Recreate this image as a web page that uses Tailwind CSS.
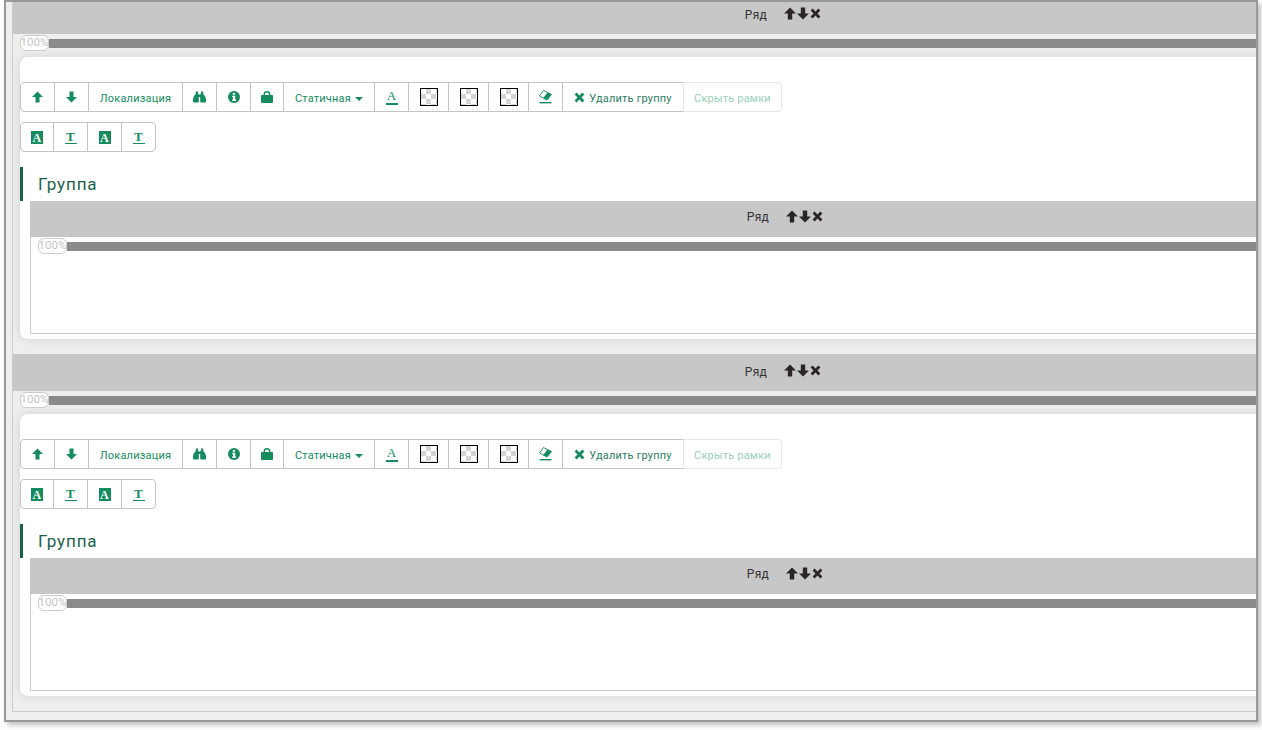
<!DOCTYPE html>
<html lang="ru">

<head>
    <meta charset="UTF-8">
    <meta name="viewport" content="width=device-width, initial-scale=1.0">
    <title>Группа</title>
    <script src="https://cdn.jsdelivr.net/npm/@tailwindcss/browser@4"></script>
</head>

<body class="bg-white h-screen overflow-hidden font-['Roboto',sans-serif]">
    <div class="ml-[4px] w-[1254px] h-[722px] border-2 border-[#999] bg-[#eee] pl-[6px] shadow-[3px_3px_5px_rgba(0,0,0,0.25)]">
        <div id="rows" class="h-[710px] border-l border-b border-[#ccc] overflow-hidden"></div>
    </div>

    <script>
        const rowsContainer = document.getElementById("rows");

        const arrowUp = `<svg class="w-[12px] h-[13px]" viewBox="0 0 12 13" fill="currentColor"><path d="M6 0.5 L12 6.5 L8.2 6.5 L8.2 12.5 L3.8 12.5 L3.8 6.5 L0 6.5 Z"/></svg>`;
        const arrowDown = `<svg class="w-[12px] h-[13px]" viewBox="0 0 12 13" fill="currentColor"><path d="M6 12.5 L12 6.5 L8.2 6.5 L8.2 0.5 L3.8 0.5 L3.8 6.5 L0 6.5 Z"/></svg>`;
        const cross = `<svg class="w-[11px] h-[11px]" viewBox="0 0 11 11" fill="currentColor"><path d="M2.6 0.6 L5.5 3.5 L8.4 0.6 L10.4 2.6 L7.5 5.5 L10.4 8.4 L8.4 10.4 L5.5 7.5 L2.6 10.4 L0.6 8.4 L3.5 5.5 L0.6 2.6 Z"/></svg>`;

        function rowHeader(size) {
            return `
                <div class="flex items-center justify-center bg-[#c7c7c7] text-[#333] ${size}">
                    <span class="text-[12px] tracking-[0.3px] mr-[17px]">Ряд</span>
                    <span class="flex items-center gap-[1px] text-[#2b2527] relative -top-[1px]">${arrowUp}${arrowDown}${cross}</span>
                </div>`;
        }

        function progress() {
            return `
                <div class="flex items-center h-[16px]">
                    <span class="flex items-center justify-center shrink-0 w-[29px] h-[16px] border border-[#ccc] rounded-[6px] bg-white text-[11.5px] text-[#c4c4c4] z-10">100%</span>
                    <div class="flex-1 h-[9px] bg-[#8a8a8a]"></div>
                </div>`;
        }

        const btn = "flex items-center justify-center h-[30px] border -ml-[1px] first:ml-0 bg-white text-[11px] tracking-[0.2px] first:rounded-l-[4px] last:rounded-r-[4px]";
        const normal = "border-[#c4c4c4] text-[#148c5e]";
        const checker = `<span class="block w-[18px] h-[18px] border border-black bg-[repeating-conic-gradient(#d4d4d4_0_25%,#fff_0_50%)] bg-[length:10px_10px]"></span>`;
        const letterA = `<span class="block w-[12px] h-[13px] bg-[#148c5e] text-white text-[12px] leading-[14px] font-bold text-center font-['Liberation_Serif',serif]">A</span>`;
        const letterT = `<span class="block w-[12px] h-[14px] border-b border-[#148c5e] text-[#148c5e] text-[13px] leading-[13px] font-bold text-center font-['Liberation_Serif',serif]">T</span>`;

        function toolbars() {
            return `
                <div class="flex">
                    <button class="${btn} ${normal} w-[35px]"><svg class="w-[11px] h-[12px]" viewBox="0 0 12 13" fill="currentColor"><path d="M6 0.5 L12 6.5 L8.2 6.5 L8.2 12.5 L3.8 12.5 L3.8 6.5 L0 6.5 Z"/></svg></button>
                    <button class="${btn} ${normal} w-[35px]"><svg class="w-[11px] h-[12px]" viewBox="0 0 12 13" fill="currentColor"><path d="M6 12.5 L12 6.5 L8.2 6.5 L8.2 0.5 L3.8 0.5 L3.8 6.5 L0 6.5 Z"/></svg></button>
                    <button class="${btn} ${normal} w-[95px] pt-[4px]">Локализация</button>
                    <button class="${btn} ${normal} w-[35px]"><svg class="w-[13px] h-[12px]" viewBox="0 0 13 12" fill="currentColor"><path d="M2.8 0.5 H5 V3 H5.8 V10.5 Q5.8 11.5 4.8 11.5 H1 Q0 11.5 0 10.5 V8 Q0.6 4.5 2.8 3 Z M8 0.5 H10.2 V3 Q12.4 4.5 13 8 V10.5 Q13 11.5 12 11.5 H8.2 Q7.2 11.5 7.2 10.5 V3 H8 Z M5.8 3.5 H7.2 V6 H5.8 Z"/></svg></button>
                    <button class="${btn} ${normal} w-[35px]"><svg class="w-[12px] h-[12px]" viewBox="0 0 12 12"><circle cx="6" cy="6" r="6" fill="currentColor"/><path d="M4.8 2 H7.2 V3.8 H4.8 Z M4.2 4.8 H7.2 V8.6 H8 V10 H4.2 V8.6 H5 V6.2 H4.2 Z" fill="#fff"/></svg></button>
                    <button class="${btn} ${normal} w-[34px]"><svg class="w-[12px] h-[12px]" viewBox="0 0 12 12" fill="currentColor"><path d="M0.8 4 H2.6 V3 Q2.6 0 6 0 Q9.4 0 9.4 3 V4 H11.2 Q12 4 12 4.8 V11 Q12 12 11 12 H1 Q0 12 0 11 V4.8 Q0 4 0.8 4 Z M4 4 H8 V3 Q8 1.4 6 1.4 Q4 1.4 4 3 Z"/></svg></button>
                    <button class="${btn} ${normal} w-[92px] pt-[4px]">Статичная<span class="ml-[4px] border-x-[4px] border-x-transparent border-t-[4px] border-t-[#148c5e]"></span></button>
                    <button class="${btn} ${normal} w-[35px]"><span class="block w-[12px] h-[15px] border-b-2 border-[#148c5e] text-[13px] leading-[12px] text-center font-['Liberation_Serif',serif]">A</span></button>
                    <button class="${btn} ${normal} w-[41px]">${checker}</button>
                    <button class="${btn} ${normal} w-[41px]">${checker}</button>
                    <button class="${btn} ${normal} w-[41px]">${checker}</button>
                    <button class="${btn} ${normal} w-[35px]"><svg class="w-[13px] h-[14px]" viewBox="0 0 13 14"><path d="M4.5 0.5 L12.5 4.5 L8 10 L0.5 6 Z" fill="#fff" stroke="currentColor" stroke-width="0.9"/><path d="M8.5 2.5 L12.5 4.5 L8 10 L4.2 8 Z" fill="currentColor"/><rect x="0.5" y="12" width="12" height="1.4" fill="currentColor"/></svg></button>
                    <button class="${btn} border-[#c4c4c4] text-[#2d7c66] w-[122px] pt-[4px]"><svg class="w-[11px] h-[11px] mr-[4px] -mt-[4px] text-[#148c5e]" viewBox="0 0 11 11" fill="currentColor"><path d="M2.6 0.6 L5.5 3.5 L8.4 0.6 L10.4 2.6 L7.5 5.5 L10.4 8.4 L8.4 10.4 L5.5 7.5 L2.6 10.4 L0.6 8.4 L3.5 5.5 L0.6 2.6 Z"/></svg>Удалить группу</button>
                    <button class="${btn} border-[#e6e6e6] text-[#98d0ba] w-[99px] pt-[4px]">Скрыть рамки</button>
                </div>
                <div class="flex mt-[10px]">
                    <button class="${btn} ${normal} w-[34px]">${letterA}</button>
                    <button class="${btn} ${normal} w-[35px]">${letterT}</button>
                    <button class="${btn} ${normal} w-[35px]">${letterA}</button>
                    <button class="${btn} ${normal} w-[35px]">${letterT}</button>
                </div>`;
        }

        function row() {
            return `
                <div class="w-[1538px] mb-[15px] first:-mt-[5px]">
                    ${rowHeader("h-[37px] pl-[2px] pb-[2px]")}
                    <div class="pl-[7px] pt-[1px]">${progress()}</div>
                    <div class="mx-[7px] mt-[6px] h-[282px] bg-white rounded-[8px] pt-[25px] shadow-[0_0_10px_rgba(0,0,0,0.12)]">
                        ${toolbars()}
                        <div class="mt-[15px] h-[34px] border-l-[3px] border-[#1a5f4a] pl-[15px] pt-[2px] flex items-center text-[17px] tracking-[0.9px] text-[#1a5f4a]">Группа</div>
                        <div class="ml-[10px] mr-[4px] h-[133px] border border-t-0 border-[#ccc]">
                            <div class="-mx-[1px]">${rowHeader("h-[36px] pb-[4px]")}</div>
                            <div class="pl-[7px] pt-[1px]">${progress()}</div>
                        </div>
                    </div>
                </div>`;
        }

        rowsContainer.innerHTML = row() + row();
    </script>
</body>

</html>
